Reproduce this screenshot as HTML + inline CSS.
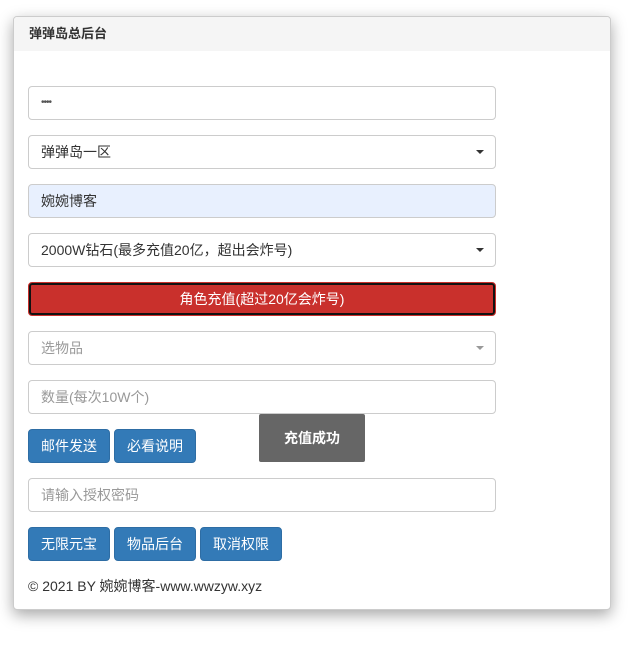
<!DOCTYPE html>
<html><head><meta charset="utf-8"><style>
body{margin:0;background:#fff;font-family:"Liberation Sans","Noto Sans CJK SC",sans-serif;font-size:14px;color:#333;}
.panel{position:absolute;left:13px;top:16px;width:596px;height:592px;border:1px solid #ccc;border-radius:4px;box-shadow:0 5px 15px rgba(0,0,0,.35);background:#fff;overflow:hidden}
.hd{height:34px;background:#f5f5f5;line-height:34px;padding-left:15px;font-weight:bold;font-size:13px;color:#333}
.f{position:absolute;left:28px;height:32px;border:1px solid #ccc;border-radius:4px;line-height:32px;padding-left:12px;box-sizing:content-box;width:454px}
.ph{color:#999}
.car{position:absolute;right:11px;top:14px;border-left:4px solid transparent;border-right:4px solid transparent;border-top:4px solid #333}
.btn{position:absolute;height:32px;width:80px;background:#337ab7;border:1px solid #2e6da4;border-radius:4px;color:#fff;text-align:center;line-height:32px}
</style></head><body>
<div class="panel"><div class="hd">弹弹岛总后台</div></div>
<div class="f" style="top:86px;font-size:10px;color:#555;letter-spacing:-1px">••••</div>
<div class="f" style="top:135px">弹弹岛一区<span class="car"></span></div>
<div class="f" style="top:184px;background:#e8f0fe">婉婉博客</div>
<div class="f" style="top:233px">2000W钻石(最多充值20亿，超出会炸号)<span class="car"></span></div>
<div style="position:absolute;left:28px;top:282px;width:466px;height:32px;border:1px solid #c9302c;border-radius:4px;background:#c9302c;box-shadow:inset 0 0 0 2px #111;color:#fff;text-align:center;line-height:32px">角色充值(超过20亿会炸号)</div>
<div class="f ph" style="top:331px">选物品<span class="car" style="border-top-color:#999"></span></div>
<div class="f ph" style="top:380px">数量(每次10W个)</div>
<div class="btn" style="left:28px;top:429px">邮件发送</div>
<div class="btn" style="left:114px;top:429px">必看说明</div>
<div style="position:absolute;left:259px;top:414px;width:106px;height:48px;background:#666;border-radius:2px;color:#fff;text-align:center;line-height:48px;font-weight:bold">充值成功</div>
<div class="f ph" style="top:478px">请输入授权密码</div>
<div class="btn" style="left:28px;top:527px">无限元宝</div>
<div class="btn" style="left:114px;top:527px">物品后台</div>
<div class="btn" style="left:200px;top:527px">取消权限</div>
<div style="position:absolute;left:28px;top:577px;line-height:18px">© 2021 BY 婉婉博客-www.wwzyw.xyz</div>
</body></html>
